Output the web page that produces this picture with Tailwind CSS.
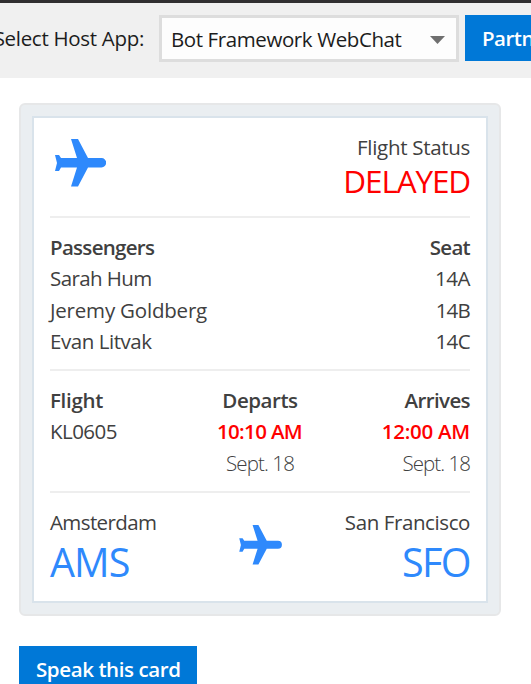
<!DOCTYPE html>
<html lang="en">
<head>
<meta charset="utf-8">
<title>Flight Status</title>
<script src="https://cdn.jsdelivr.net/npm/@tailwindcss/browser@4"></script>
</head>
<body class="h-[684px] w-[531px] overflow-hidden bg-white font-['Open_Sans','Noto_Sans',sans-serif] text-[20.5px] leading-[31.4px] text-[#404040]">
<header class="flex h-[78px] items-start overflow-hidden border-t-3 border-[#302e30] bg-[#f0f0f0] pt-3 whitespace-nowrap text-[#1c1c1c]">
  <div class="flex w-[144px] shrink-0 justify-end pt-2 tracking-[-0.3px]">Select Host App:</div>
  <div class="ml-[15px] flex h-[47px] w-[300px] shrink-0 items-center justify-between border-3 border-[#dddddd] bg-[#fdfdfd] pt-[2px] pr-[11px] pl-[9px]">
    <span class="tracking-[-0.4px]">Bot Framework WebChat</span>
    <svg class="h-2 w-[15px]" viewBox="0 0 15 8"><path d="M0 0h15L7.500 8z" fill="#6f6f6f"/></svg>
  </div>
  <div class="ml-1.5 h-[46px] w-[110px] shrink-0 bg-[#0078d7] pt-2 pl-[17px] font-semibold tracking-[-0.5px] text-white">Partners</div>
</header>
<main class="pt-[25px] pl-[19px]">
  <section class="h-[513px] w-[482px] rounded-md border-2 border-[#e6e7e8] bg-[#eaeef1] p-[11px]">
    <div class="h-[487px] w-[456px] border-2 border-[#d9e3eb] bg-white px-4 pt-[13px] whitespace-nowrap">
      <div class="flex h-[87px] justify-between border-b-2 border-[#eeeeee]">
        <svg class="mt-2 ml-[5px] h-[48px] w-[51px]" viewBox="0 0 51 48"><path d="M16 0h7l10 19h13.500a4.700 4.700 0 0 1 0 9.400H33L23 47.500h-7l6-19.100H6L4 32H0l2-8-2-8h4l2 3h16z" fill="#2e89fc"/></svg>
        <div class="pt-px text-right">
          <div class="tracking-[-0.3px]">Flight Status</div>
          <div class="text-[31.5px] leading-[36px] tracking-[-1.15px] text-[#ff0000]">DELAYED</div>
        </div>
      </div>
      <div class="flex h-[153px] justify-between border-b-2 border-[#eeeeee] pt-[14px]">
        <div>
          <div class="font-semibold tracking-[-0.7px]">Passengers</div>
          <div class="tracking-[-0.6px]">Sarah Hum</div>
          <div class="tracking-[-0.2px]">Jeremy Goldberg</div>
          <div class="tracking-[-0.45px]">Evan Litvak</div>
        </div>
        <div class="text-right">
          <div class="font-semibold tracking-[-0.7px]">Seat</div>
          <div class="tracking-[-0.5px]">14A</div>
          <div class="tracking-[-0.8px]">14B</div>
          <div class="tracking-[-0.6px]">14C</div>
        </div>
      </div>
      <div class="grid h-[122px] grid-cols-3 border-b-2 border-[#eeeeee] pt-[14px]">
        <div>
          <div class="font-semibold tracking-[-0.3px]">Flight</div>
          <div class="tracking-[-0.55px]">KL0605</div>
        </div>
        <div class="text-center">
          <div class="font-semibold tracking-[-0.45px]">Departs</div>
          <div class="pr-px font-semibold tracking-[-0.65px] text-[#ff0000]">10:10 AM</div>
          <div class="font-light tracking-[-0.9px]">Sept. 18</div>
        </div>
        <div class="text-right">
          <div class="font-semibold tracking-[-0.6px]">Arrives</div>
          <div class="font-semibold tracking-[-0.25px] text-[#ff0000]">12:00 AM</div>
          <div class="font-light tracking-[-0.95px]">Sept. 18</div>
        </div>
      </div>
      <div class="grid grid-cols-3 pt-[14px]">
        <div>
          <div class="tracking-[-0.6px]">Amsterdam</div>
          <div class="text-[39.5px] leading-[48px] tracking-[-0.9px] text-[#2e89fc]">AMS</div>
        </div>
        <svg class="mt-[18px] ml-[49px] h-[40px] w-[43px]" viewBox="0 0 51 48"><path d="M16 0h7l10 19h13.500a4.700 4.700 0 0 1 0 9.400H33L23 47.500h-7l6-19.100H6L4 32H0l2-8-2-8h4l2 3h16z" fill="#2e89fc"/></svg>
        <div class="text-right">
          <div class="tracking-[-0.4px]">San Francisco</div>
          <div class="text-[39.5px] leading-[48px] tracking-[-1.6px] text-[#2e89fc]">SFO</div>
        </div>
      </div>
    </div>
  </section>
  <div class="mt-[30px] h-[46px] w-[178px] bg-[#0078d7] pt-2 pl-[17px] font-semibold tracking-[-0.4px] whitespace-nowrap text-white">Speak this card</div>
</main>
</body>
</html>
